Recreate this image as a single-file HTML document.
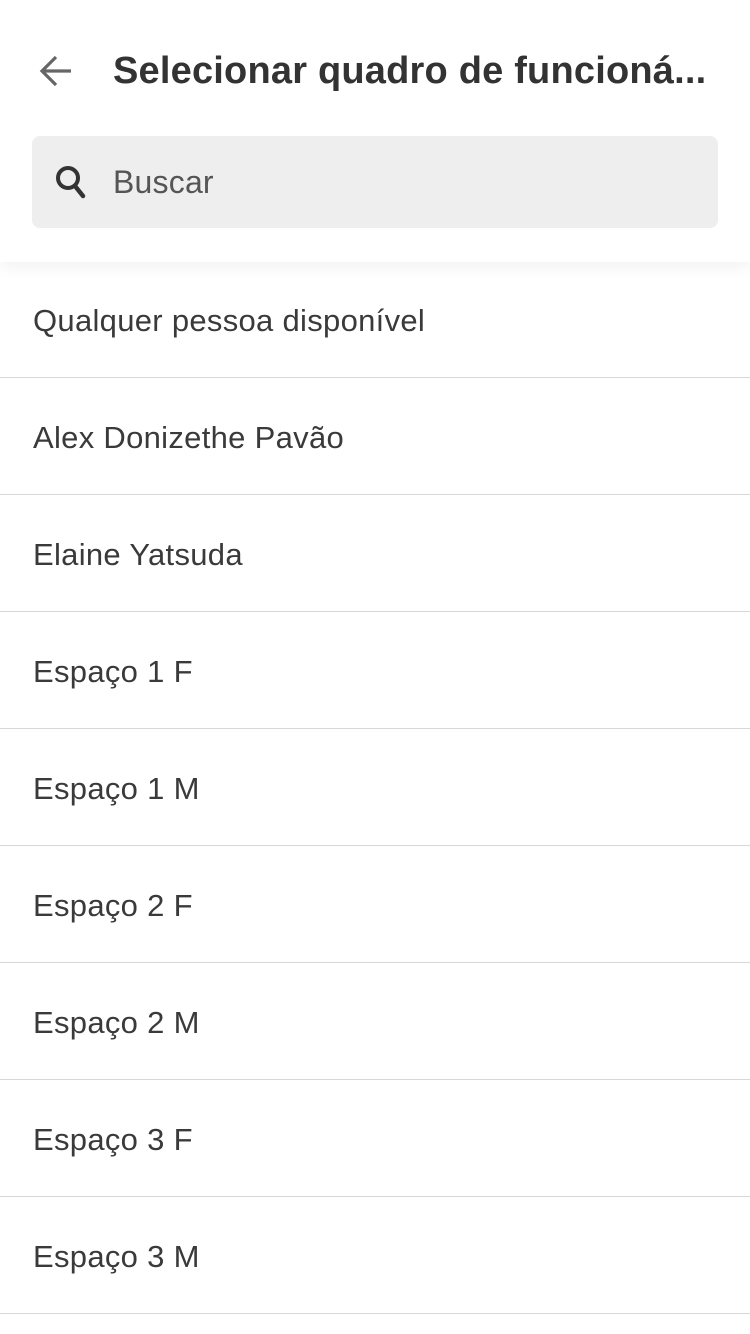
<!DOCTYPE html>
<html><head><meta charset="utf-8">
<style>
html,body{margin:0;padding:0;background:#fff;width:750px;height:1334px;overflow:hidden;font-family:"Liberation Sans",sans-serif;}
.header{position:absolute;left:0;top:0;width:750px;height:262px;background:#fff;box-shadow:0 6px 14px rgba(0,0,0,0.05);z-index:2}
.back{position:absolute;left:38px;top:53px}
.title{position:absolute;left:113px;top:50px;font-size:38px;font-weight:bold;color:#333;letter-spacing:0.2px;white-space:nowrap}
.search{position:absolute;left:32px;top:136px;width:686px;height:92px;background:#eeeeee;border-radius:8px}
.search svg{position:absolute;left:23px;top:29px}
.search span{position:absolute;left:81px;top:28px;font-size:32px;color:#555;letter-spacing:0.2px}
.list{position:absolute;left:0;top:261px;width:750px}
.row{height:116px;border-bottom:1px solid #d8d8d8;position:relative}
.row span{position:absolute;left:33px;top:42px;font-size:31px;color:#3a3a3a;letter-spacing:0.3px;white-space:nowrap}
</style></head><body>
<div class="header">
  <svg class="back" width="36" height="36" viewBox="0 0 36 36"><path d="M33 18H5M18 4L4 18l14 14" fill="none" stroke="#666" stroke-width="3.2"/></svg>
  <div class="title">Selecionar quadro de funcioná...</div>
  <div class="search">
    <svg width="32" height="34" viewBox="0 0 32 34"><circle cx="13" cy="13" r="10" fill="none" stroke="#333" stroke-width="4"/><path d="M20 21l8 10" stroke="#333" stroke-width="4.5" stroke-linecap="round"/></svg>
    <span>Buscar</span>
  </div>
</div>
<div class="list">
  <div class="row"><span>Qualquer pessoa disponível</span></div>
  <div class="row"><span>Alex Donizethe Pavão</span></div>
  <div class="row"><span>Elaine Yatsuda</span></div>
  <div class="row"><span>Espaço 1 F</span></div>
  <div class="row"><span>Espaço 1 M</span></div>
  <div class="row"><span>Espaço 2 F</span></div>
  <div class="row"><span>Espaço 2 M</span></div>
  <div class="row"><span>Espaço 3 F</span></div>
  <div class="row"><span>Espaço 3 M</span></div>
</div>
</body></html>
